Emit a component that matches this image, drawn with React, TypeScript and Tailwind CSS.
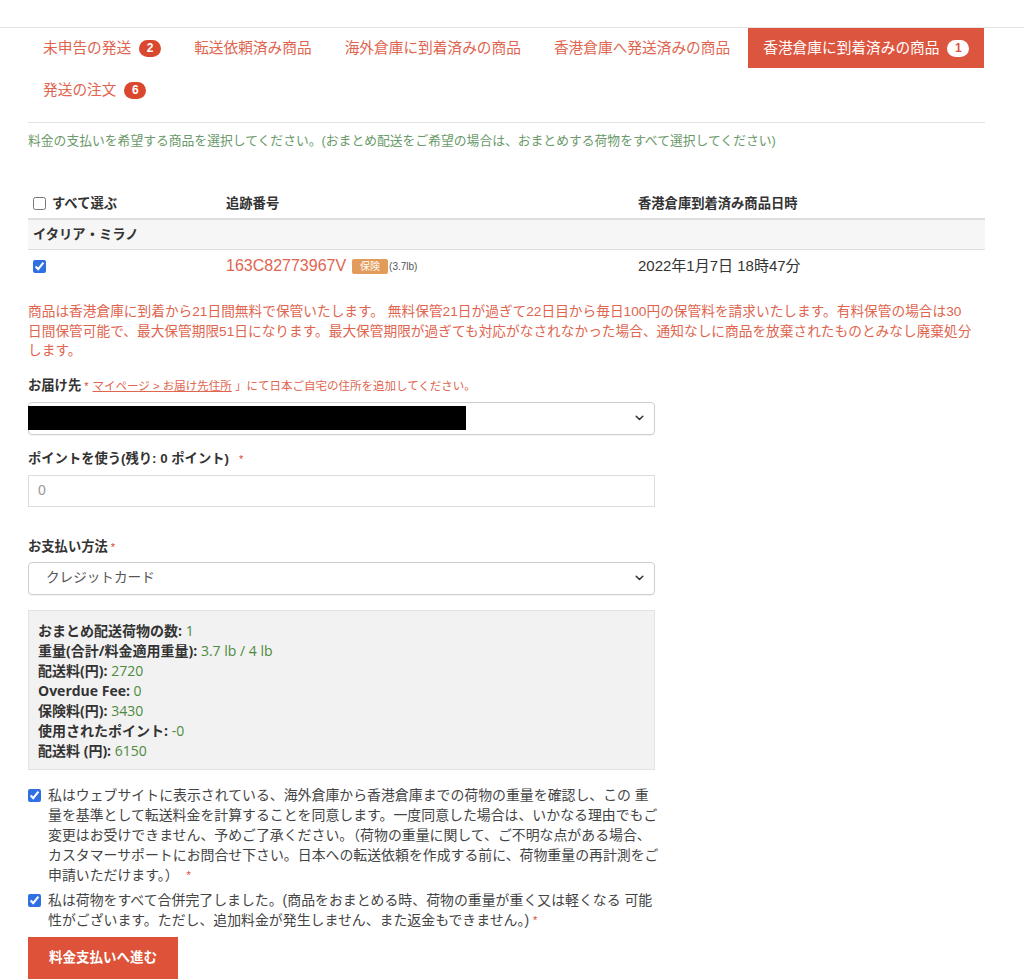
import { ReactNode } from 'react';

const tabs: { label: string; badge?: number; active?: boolean }[] = [
    { label: '未申告の発送', badge: 2 },
    { label: '転送依頼済み商品' },
    { label: '海外倉庫に到着済みの商品' },
    { label: '香港倉庫へ発送済みの商品' },
    { label: '香港倉庫に到着済みの商品', badge: 1, active: true },
    { label: '発送の注文', badge: 6 },
];

const summary: [string, string][] = [
    ['おまとめ配送荷物の数:', '1'],
    ['重量(合計/料金適用重量):', '3.7 lb / 4 lb'],
    ['配送料(円):', '2720'],
    ['Overdue Fee:', '0'],
    ['保険料(円):', '3430'],
    ['使用されたポイント:', '-0'],
    ['配送料 (円):', '6150'],
];

function Chevron() {
    return (
        <svg width="9" height="6" viewBox="0 0 9 6" className="text-[#333]">
            <path d="M1.2 1.2 L4.5 4.5 L7.8 1.2" fill="none" stroke="currentColor" strokeWidth="1.5" strokeLinecap="round" strokeLinejoin="round" />
        </svg>
    );
}

function Label({ children }: { children: ReactNode }) {
    return <div className="text-[13.3px] leading-[18px] font-bold text-[#333]">{children}</div>;
}

function Req() {
    return <span className="text-[#d9472f] text-[11px] align-top ml-[3px]">*</span>;
}

export default function App() {
    return (
        <div className="w-[1024px] min-h-[980px] bg-white font-['Liberation_Sans','Noto_Sans_CJK_JP',sans-serif] text-[#333]">
            <div className="h-[28px] border-b border-[#e3e3e3]" />

            <div className="pl-[28px] w-[985px]">
                {/* tabs */}
                <ul className="flex flex-wrap gap-x-[3px] gap-y-[2px] w-[960px]">
                    {tabs.map(t => (
                        <li
                            key={t.label}
                            className={
                                t.active
                                    ? 'h-[40px] px-[15px] flex items-center bg-[#dc563f] text-white text-[14.7px]'
                                    : 'h-[40px] px-[15px] flex items-center text-[#e0654f] text-[14.7px]'
                            }
                        >
                            <span>{t.label}</span>
                            {t.badge !== undefined && (
                                <span
                                    className={
                                        t.active
                                            ? 'ml-[8px] h-[17px] min-w-[22px] px-[6px] rounded-full bg-white text-[#dc563f] text-[12px] font-bold flex items-center justify-center'
                                            : 'ml-[8px] h-[17px] min-w-[22px] px-[6px] rounded-full bg-[#d9472f] text-white text-[12px] font-bold flex items-center justify-center'
                                    }
                                >
                                    {t.badge}
                                </span>
                            )}
                        </li>
                    ))}
                </ul>

                <div className="mt-[12px] border-b border-[#e3e3e3]" />

                <p className="pt-[9px] text-[12.8px] leading-[18px] text-[#6a9a6a]">
                    料金の支払いを希望する商品を選択してください。(おまとめ配送をご希望の場合は、おまとめする荷物をすべて選択してください)
                </p>

                {/* table */}
                <div className="mt-[39px]">
                    <div className="grid grid-cols-[193px_412px_1fr] h-[31px] items-center border-b-2 border-[#dedede] text-[13.3px] font-bold">
                        <label className="px-[5px] flex items-center gap-[6px]">
                            <input type="checkbox" className="w-[13px] h-[13px] m-0" />
                            すべて選ぶ
                        </label>
                        <div className="px-[5px]">追跡番号</div>
                        <div className="px-[5px]">香港倉庫到着済み商品日時</div>
                    </div>
                    <div className="h-[30px] flex items-center px-[5px] bg-[#f6f6f6] border-b border-[#dedede] text-[13.3px] font-bold">
                        イタリア・ミラノ
                    </div>
                    <div className="grid grid-cols-[193px_412px_1fr] h-[32px] items-center">
                        <div className="px-[5px] flex items-center">
                            <input type="checkbox" defaultChecked className="w-[13px] h-[13px] m-0 accent-[#2f6fe4]" />
                        </div>
                        <div className="px-[5px] flex items-center">
                            <span className="text-[16px] text-[#e0654f]">163C82773967V</span>
                            <span className="ml-[6px] h-[15px] px-[8px] rounded-[2px] bg-[#e39b5b] text-white text-[10px] leading-[15px]">保険</span>
                            <span className="ml-[1px] text-[10px] text-[#555]">(3.7lb)</span>
                        </div>
                        <div className="px-[5px] text-[15px]">2022年1月7日 18時47分</div>
                    </div>
                </div>

                <p className="mt-[20px] text-[13.7px] leading-[19.5px] text-[#e0654f] whitespace-nowrap">
                    商品は香港倉庫に到着から21日間無料で保管いたします。 無料保管21日が過ぎて22日目から毎日100円の保管料を請求いたします。有料保管の場合は30
                    <br />
                    日間保管可能で、最大保管期限51日になります。最大保管期限が過ぎても対応がなされなかった場合、通知なしに商品を放棄されたものとみなし廃棄処分
                    <br />
                    します。
                </p>

                {/* form */}
                <div className="w-[627px]">
                    <div className="mt-[16px] flex items-baseline">
                        <Label>お届け先</Label>
                        <Req />
                        <span className="ml-[4px] text-[11.5px] text-[#e0654f]">
                            <span className="underline">マイページ &gt; お届け先住所</span> 」にて日本ご自宅の住所を追加してください。
                        </span>
                    </div>
                    <div className="relative mt-[7px] h-[33px] border border-[#cfcfcf] rounded-[4px] flex items-center justify-end pr-[10px] shadow-[0_1px_1px_rgba(0,0,0,0.05)]">
                        <div className="absolute left-[-1px] top-[3px] w-[438px] h-[24px] bg-black" />
                        <Chevron />
                    </div>

                    <div className="mt-[15px] flex items-baseline">
                        <Label>ポイントを使う(残り: 0 ポイント)</Label>
                        <span className="text-[#d9472f] text-[11px] align-top ml-[10px]">*</span>
                    </div>
                    <div className="mt-[7px] h-[32px] border border-[#dcdcdc] flex items-center px-[9px] text-[14px] text-[#999]">
                        0
                    </div>

                    <div className="mt-[31px] flex items-baseline">
                        <Label>お支払い方法</Label>
                        <Req />
                    </div>
                    <div className="mt-[6px] h-[33px] border border-[#cfcfcf] rounded-[4px] flex items-center justify-between pl-[17px] pr-[10px] text-[13.6px] text-[#555] shadow-[0_1px_1px_rgba(0,0,0,0.05)]">
                        <span>クレジットカード</span>
                        <Chevron />
                    </div>

                    <div className="mt-[15px] h-[160px] border border-[#e3e3e3] bg-[#f2f2f2] pt-[10px] px-[9px] font-['Open_Sans','Noto_Sans_CJK_JP',sans-serif] text-[14px] leading-[20px]">
                        {summary.map(([k, v]) => (
                            <div key={k}>
                                <span className="font-bold text-[#333]">{k}</span>{' '}
                                <span className="text-[#4e8a40]">{v}</span>
                            </div>
                        ))}
                    </div>

                    {/* agreements */}
                    <div className="mt-[15px] flex gap-[7px] text-[13.9px] leading-[20px] text-[#444]">
                        <input type="checkbox" defaultChecked className="w-[13px] h-[13px] mt-[4px] shrink-0 accent-[#2f6fe4]" />
                        <p className="whitespace-nowrap">
                            私はウェブサイトに表示されている、海外倉庫から香港倉庫までの荷物の重量を確認し、この 重
                            <br />
                            量を基準として転送料金を計算することを同意します。一度同意した場合は、いかなる理由でもご
                            <br />
                            変更はお受けできません、予めご了承ください。（荷物の重量に関して、ご不明な点がある場合、
                            <br />
                            カスタマーサポートにお問合せ下さい。日本への転送依頼を作成する前に、荷物重量の再計測をご
                            <br />
                            申請いただけます。）<span className="text-[#d9472f] text-[11px] align-top ml-[8px]">*</span>
                        </p>
                    </div>
                    <div className="mt-[5px] flex gap-[7px] text-[13.9px] leading-[20px] text-[#444]">
                        <input type="checkbox" defaultChecked className="w-[13px] h-[13px] mt-[4px] shrink-0 accent-[#2f6fe4]" />
                        <p className="whitespace-nowrap">
                            私は荷物をすべて合併完了しました。(商品をおまとめる時、荷物の重量が重く又は軽くなる 可能
                            <br />
                            性がございます。ただし、追加料金が発生しません、また返金もできません。)<span className="text-[#d9472f] text-[11px] align-top ml-[4px]">*</span>
                        </p>
                    </div>

                    <button
                        type="button"
                        className="mt-[7px] h-[42px] w-[150px] bg-[#dd5238] text-white text-[13.5px] font-bold"
                    >
                        料金支払いへ進む
                    </button>
                </div>
            </div>
        </div>
    );
}
